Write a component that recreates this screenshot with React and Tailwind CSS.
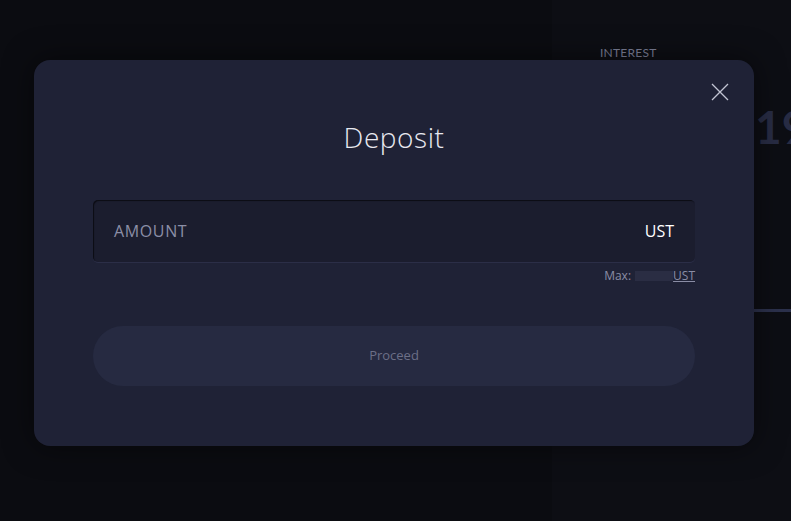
import React from "react";

export default function App() {
  return (
    <div className="relative w-[791px] h-[521px] overflow-hidden bg-[#0b0c11] font-['Open_Sans',sans-serif]">
      {/* background page */}
      <div className="flex h-full">
        <div className="w-[552px] shrink-0" />
        <div className="flex-1 min-w-0 overflow-hidden bg-[#0d0e14] pl-[48px] pt-[44px]">
          <div className="text-[12px] tracking-[0.02em] text-[#7b7f97] font-['Lato',sans-serif]">INTEREST</div>
          <div className="mt-[42px] ml-[155px] text-[46px] leading-none font-bold text-[#282c44] font-['Lato',sans-serif] whitespace-nowrap">19</div>
          <div className="mt-[159px] ml-[154px] h-[3px] bg-[#2c314c]" />
        </div>
      </div>

      {/* modal */}
      <div className="absolute left-[34px] top-[60px] w-[720px] h-[386px] rounded-[16px] bg-[#1f2236] shadow-[0_0_30px_rgba(0,0,0,0.5)] px-[59px] pt-[58px]">
        <button className="absolute right-[25px] top-[23px] w-[18px] h-[18px] text-[#c2c5d3]">
          <svg viewBox="0 0 18 18" width="18" height="18" fill="none" stroke="currentColor" strokeWidth="1.3">
            <path d="M1 1L17 17M17 1L1 17" />
          </svg>
        </button>
        <h2 className="text-center text-[28px] leading-[38px] font-light text-[#e8e9f0] tracking-[0.02em]">Deposit</h2>
        <div className="mt-[44px] h-[62px] rounded-[5px] bg-[#1b1d2e] shadow-[inset_1px_1px_1px_rgba(0,0,0,0.6),0_1px_0_#2b2e47] flex items-center justify-between pl-[21px] pr-[21px]">
          <span className="text-[16px] text-[#8b8ea6] tracking-[0.04em]">AMOUNT</span>
          <span className="text-[16px] text-white">UST</span>
        </div>
        <div className="flex justify-end items-center mt-[5px] text-[12px] text-[#8a8da5]">
          <span>Max:</span>
          <span className="ml-[4px] w-[38px] h-[10px] bg-[#2f3248] opacity-70" />
          <span className="underline">UST</span>
        </div>
        <button className="mt-[41px] w-full h-[60px] rounded-full bg-[#262a41] text-[13px] text-[#6c6f87]">Proceed</button>
      </div>
    </div>
  );
}
